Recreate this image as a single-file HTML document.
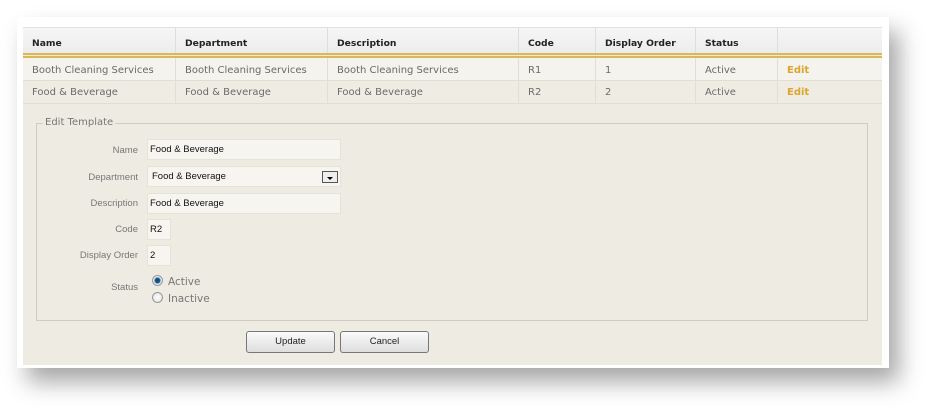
<!DOCTYPE html>
<html><head><meta charset="utf-8"><style>
*{margin:0;padding:0;box-sizing:border-box}
body{width:937px;height:416px;background:#fff;position:relative;overflow:hidden;font-family:"Liberation Sans",sans-serif}
.frame{position:absolute;left:17px;top:17px;width:872px;height:351px;background:#fff;box-shadow:10px 14px 22px rgba(0,0,0,.35)}
.panel{position:absolute;left:23px;top:27px;width:859px;height:338px;background:#eeebe2}
.hdr{position:absolute;left:0;top:0;width:859px;height:27px;background:linear-gradient(#f6f6f6,#ececec);border-top:1px solid #e0e0e0}
.gold{position:absolute;left:0;top:26px;width:859px;height:5px;border-top:2px solid #dcb65a;border-bottom:2px solid #dcb65a;background:#f5ecd0}
.row{position:absolute;left:0;width:859px;border-bottom:1px solid #e2ded3}
.c{position:absolute;top:0;height:100%;font-family:"DejaVu Sans",sans-serif;font-size:10px;color:#6a6a6a;padding-left:9px;border-left:1px solid #e2ded3;white-space:nowrap}
.hdr .c{color:#222;font-weight:bold;font-size:9.2px;line-height:31px;border-left:1px solid #dedede}
.edit{color:#dca52e;font-weight:bold}
fieldset{position:absolute;left:13px;top:96px;width:832px;height:198px;border:1px solid #cfcbc0}
.legend{position:absolute;left:43px;top:117px;background:#eeebe2;padding:0 2px;font-family:"DejaVu Sans",sans-serif;font-size:10px;color:#777}
.lab{position:absolute;right:799px;font-size:9.5px;color:#777;text-align:right}
.inp{position:absolute;background:#f7f5f0;border:1px solid #e6e2d8;font-size:9.5px;color:#111;padding-left:2px;line-height:19px}
.btn{position:absolute;top:331px;height:22px;width:89px;border:1px solid #777;border-radius:3px;background:linear-gradient(#fafafa,#dedede);font-size:9.5px;color:#222;text-align:center;line-height:20px}
.radio{position:absolute;width:11px;height:11px;border-radius:50%;border:1px solid #999;background:radial-gradient(#fff,#ddd)}
.rt{position:absolute;font-family:"DejaVu Sans",sans-serif;font-size:10.5px;color:#777}
</style></head><body>
<div class="frame"></div>
<div class="panel">
 <div class="hdr">
  <div class="c" style="left:0;border-left:none">Name</div>
  <div class="c" style="left:152px">Department</div>
  <div class="c" style="left:304px">Description</div>
  <div class="c" style="left:495px">Code</div>
  <div class="c" style="left:572px">Display Order</div>
  <div class="c" style="left:672px">Status</div>
  <div class="c" style="left:754px;width:105px"></div>
 </div>
 <div class="gold"></div>
 <div class="row" style="top:31px;height:23px;background:#f5f3ee;line-height:25px">
  <div class="c" style="left:0;border-left:none">Booth Cleaning Services</div>
  <div class="c" style="left:152px">Booth Cleaning Services</div>
  <div class="c" style="left:304px">Booth Cleaning Services</div>
  <div class="c" style="left:495px">R1</div>
  <div class="c" style="left:572px">1</div>
  <div class="c" style="left:672px">Active</div>
  <div class="c edit" style="left:754px">Edit</div>
 </div>
 <div class="row" style="top:54px;height:23px;background:#efece4;line-height:24px">
  <div class="c" style="left:0;border-left:none">Food &amp; Beverage</div>
  <div class="c" style="left:152px">Food &amp; Beverage</div>
  <div class="c" style="left:304px">Food &amp; Beverage</div>
  <div class="c" style="left:495px">R2</div>
  <div class="c" style="left:572px">2</div>
  <div class="c" style="left:672px">Active</div>
  <div class="c edit" style="left:754px">Edit</div>
 </div>
 <fieldset></fieldset>
</div>
<div class="legend">Edit Template</div>
<div class="lab" style="top:145px">Name</div>
<div class="inp" style="left:147px;top:139px;width:194px;height:21px">Food &amp; Beverage</div>
<div class="lab" style="top:172px">Department</div>
<div class="inp" style="left:147px;top:166px;width:194px;height:21px;padding-left:4px">Food &amp; Beverage
 <div style="position:absolute;left:174px;top:4px;width:16px;height:12px;border:1px solid #555;background:#eee"><div style="position:absolute;left:4px;top:5px;border-left:3px solid transparent;border-right:3px solid transparent;border-top:3px solid #000"></div></div>
</div>
<div class="lab" style="top:198px">Description</div>
<div class="inp" style="left:147px;top:193px;width:194px;height:21px">Food &amp; Beverage</div>
<div class="lab" style="top:224px">Code</div>
<div class="inp" style="left:147px;top:219px;width:24px;height:21px">R2</div>
<div class="lab" style="top:250px">Display Order</div>
<div class="inp" style="left:147px;top:245px;width:24px;height:21px">2</div>
<div class="lab" style="top:282px">Status</div>
<div class="radio" style="left:152px;top:275px;background:radial-gradient(#1a4d80 35%,#6fa0c8 45%,#e8eef4 60%)"></div>
<div class="rt" style="left:168px;top:276px">Active</div>
<div class="radio" style="left:152px;top:292px"></div>
<div class="rt" style="left:168px;top:293px">Inactive</div>
<div class="btn" style="left:246px">Update</div>
<div class="btn" style="left:340px">Cancel</div>
</body></html>
